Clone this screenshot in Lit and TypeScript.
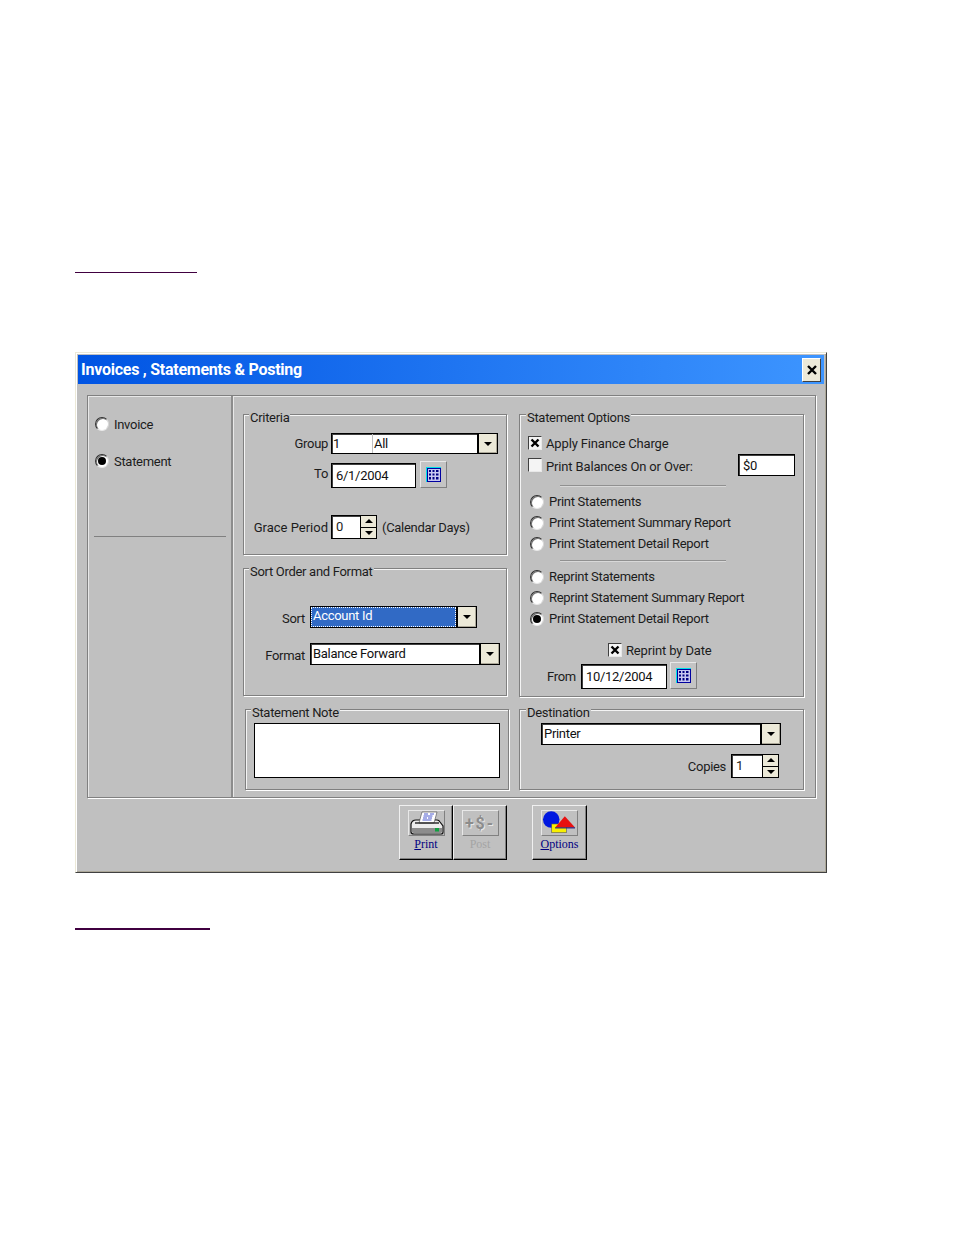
import { LitElement, css, html, svg } from 'lit'
import { customElement } from 'lit/decorators.js'

const calendarIcon = svg`
  <svg class="cal-icon" viewBox="0 0 15 15" width="15" height="15">
    <rect x="0" y="0" width="15" height="15" fill="#00e0e8" />
    <rect x="1" y="1" width="14" height="14" fill="#0000a0" />
    <rect x="2" y="2" width="12" height="12" fill="#c8c8f0" />
    <path d="M3 3h2v2H3zM6.500 3h2v2h-2zM10 3h2.500v2H10zM3 6.500h2v2H3zM6.500 6.500h2v2h-2zM10 6.500h2.500v2H10zM3 10h2v2.500H3zM6.500 10h2v2.500h-2zM10 10h2.500v2.500H10z" fill="#000080" />
  </svg>
`

const printerIcon = svg`
  <svg viewBox="0 0 35 24" width="35" height="24">
    <path d="M2 13q1-4 5-4h21q2 0 3 2l3 4v6q0 2-2 2H5q-3 0-3-2z" fill="#ececec" stroke="#111" stroke-width="1.200" />
    <path d="M3 17h30v4q0 1-2 1H5q-2 0-2-1z" fill="#8c8c8c" />
    <path d="M13 1h15l-3 11H10z" fill="#fff" stroke="#444" stroke-width=".6" />
    <path d="M15 3h4M21 3h4M14.500 5h9M14 7h4M19 7h4M13.500 9h9" stroke="#2030c0" stroke-width=".8" />
    <path d="M6 12h24" stroke="#222" stroke-width="1.400" />
    <rect x="26" y="17" width="4" height="3.500" fill="#10a040" />
  </svg>
`

const shapesIcon = svg`
  <svg viewBox="0 0 36 26" width="36" height="26">
    <circle cx="9.500" cy="9.500" r="8.500" fill="#0018e0" />
    <rect x="10" y="14" width="15" height="9" fill="#f8f000" stroke="#555" stroke-width=".6" />
    <path d="M23.500 6L34 17.500H13.500z" fill="#e81010" />
    <path d="M13.500 18h20.500" stroke="#202080" stroke-width="1.200" />
  </svg>
`

const checkMark = svg`
  <svg viewBox="0 0 10 10" width="10" height="10">
    <path d="M1.500 1.500l7 7M8.500 1.500l-7 7" stroke="#000" stroke-width="2.400" />
  </svg>
`

const closeMark = svg`
  <svg viewBox="0 0 10 10" width="10" height="10">
    <path d="M1 1l8 8M9 1l-8 8" stroke="#000" stroke-width="2.400" />
  </svg>
`

const arrowDown = svg`<svg viewBox="0 0 8 4" width="8" height="4"><path d="M0 0h8L4 4z" fill="#000" /></svg>`
const arrowUp = svg`<svg viewBox="0 0 8 4" width="8" height="4"><path d="M0 4h8L4 0z" fill="#000" /></svg>`

@customElement('app-root')
export class AppRoot extends LitElement {
  private radio(label: string, checked = false) {
    return html`
      <div class="radio-row">
        <span class="radio ${checked ? 'on' : ''}"></span>
        <span>${label}</span>
      </div>
    `
  }

  private check(checked: boolean) {
    return html`<span class="check ${checked ? 'on' : ''}">${checked ? checkMark : ''}</span>`
  }

  private dropButton() {
    return html`<span class="drop-btn">${arrowDown}</span>`
  }

  private spin(value: string) {
    return html`
      <div class="spin">
        <span class="spin-value">${value}</span>
        <span class="spin-btns">
          <span class="spin-btn">${arrowUp}</span>
          <span class="spin-btn">${arrowDown}</span>
        </span>
      </div>
    `
  }

  protected render() {
    return html`
      <div class="page">
        <div class="rule top-rule"></div>

        <div class="window">
          <div class="title-bar">
            <span class="title">Invoices , Statements &amp; Posting</span>
            <span class="close">${closeMark}</span>
          </div>

          <div class="panel">
            <div class="side">
              <div class="side-invoice">${this.radio('Invoice')}</div>
              <div class="side-statement">${this.radio('Statement', true)}</div>
              <div class="side-sep"></div>
            </div>

            <div class="main">
              <div class="col-left">
                <div class="group criteria">
                  <span class="legend">Criteria</span>
                  <div class="row group-row">
                    <span class="label crit-label">Group</span>
                    <div class="field combo group-combo">
                      <span class="group-code">1</span>
                      <span class="combo-text">All</span>
                      ${this.dropButton()}
                    </div>
                  </div>
                  <div class="row to-row">
                    <span class="label crit-label to-label">To</span>
                    <span class="field date date-to">6/1/2004</span>
                    <span class="cal-btn">${calendarIcon}</span>
                  </div>
                  <div class="row grace-row">
                    <span class="label crit-label grace-label">Grace Period</span>
                    ${this.spin('0')}
                    <span class="days">(Calendar Days)</span>
                  </div>
                </div>

                <div class="group sort">
                  <span class="legend">Sort Order and Format</span>
                  <div class="row sort-row">
                    <span class="label sort-label">Sort</span>
                    <div class="field combo sort-combo">
                      <span class="combo-text selected">Account Id</span>
                      ${this.dropButton()}
                    </div>
                  </div>
                  <div class="row format-row">
                    <span class="label sort-label">Format</span>
                    <div class="field combo format-combo">
                      <span class="combo-text">Balance Forward</span>
                      ${this.dropButton()}
                    </div>
                  </div>
                </div>

                <div class="group note">
                  <span class="legend">Statement Note</span>
                  <div class="note-box"></div>
                </div>
              </div>

              <div class="col-right">
                <div class="group options">
                  <span class="legend">Statement Options</span>
                  <div class="row apply-row">${this.check(true)}<span class="check-text">Apply Finance Charge</span></div>
                  <div class="row balance-row">
                    ${this.check(false)}<span class="check-text balance-text">Print Balances On or Over:</span>
                    <span class="field amount">$0</span>
                  </div>
                  <div class="sep sep-first"></div>
                  <div class="radio-block">
                    ${this.radio('Print Statements')}
                    ${this.radio('Print Statement Summary Report')}
                    ${this.radio('Print Statement Detail Report')}
                  </div>
                  <div class="sep sep-second"></div>
                  <div class="radio-block">
                    ${this.radio('Reprint Statements')}
                    ${this.radio('Reprint Statement Summary Report')}
                    ${this.radio('Print Statement Detail Report', true)}
                  </div>
                  <div class="row reprint-row">${this.check(true)}<span class="check-text">Reprint by Date</span></div>
                  <div class="row from-row">
                    <span class="from-label">From</span>
                    <span class="field date date-from">10/12/2004</span>
                    <span class="cal-btn">${calendarIcon}</span>
                  </div>
                </div>

                <div class="group destination">
                  <span class="legend">Destination</span>
                  <div class="field combo dest-combo">
                    <span class="combo-text">Printer</span>
                    ${this.dropButton()}
                  </div>
                  <div class="row copies-row">
                    <span>Copies</span>
                    ${this.spin('1')}
                  </div>
                </div>
              </div>
            </div>
          </div>

          <div class="toolbar">
            <div class="tool">
              <span class="tool-icon">${printerIcon}</span>
              <span class="tool-label"><u>P</u>rint</span>
            </div>
            <div class="tool">
              <span class="tool-icon dollar">+$-</span>
              <span class="tool-label disabled">Post</span>
            </div>
            <div class="tool tool-options">
              <span class="tool-icon">${shapesIcon}</span>
              <span class="tool-label"><u>O</u>ptions</span>
            </div>
          </div>
        </div>

        <div class="rule bottom-rule"></div>
      </div>
    `
  }

  static styles = css`
    :host {
      display: block;
      background: #fff;
      height: 1235px;
      font-family: Roboto, 'Liberation Sans', Arial, sans-serif;
      font-size: 13px;
      letter-spacing: -0.3px;
      color: #1c1c1c;
    }

    * {
      box-sizing: border-box;
    }

    .page {
      padding: 271px 0 0 75px;
    }

    .rule {
      background: #400040;
    }

    .top-rule {
      width: 122px;
      height: 1px;
      margin-top: 1px;
    }

    .bottom-rule {
      width: 135px;
      height: 2px;
      margin-top: 55px;
    }

    .window {
      width: 752px;
      height: 521px;
      margin-top: 79px;
      padding: 2px;
      background: #c0c0c0;
      border: 1px solid;
      border-color: #ece9d8 #404040 #404040 #ece9d8;
      box-shadow: inset 1px 1px 0 #fff, inset -1px -1px 0 #aca899;
    }

    .title-bar {
      height: 29px;
      display: flex;
      align-items: center;
      justify-content: space-between;
      padding: 0 3px 0 3px;
      background: linear-gradient(90deg, #0054e3, #3d95ff);
    }

    .title {
      color: #fff;
      font-size: 16px;
      font-weight: bold;
      letter-spacing: -0.25px;
    }

    .close {
      width: 19px;
      height: 24px;
      display: flex;
      align-items: center;
      justify-content: center;
      background: #ece9d8;
      border: 1px solid;
      border-color: #fff #404040 #404040 #fff;
    }

    .panel {
      display: flex;
      width: 729px;
      height: 403px;
      margin: 11px 0 0 9px;
      border: 1px solid #808080;
      box-shadow: inset 1px 1px 0 #e8e8e8, 1px 1px 0 #fff;
    }

    .side {
      width: 145px;
      border-right: 2px solid #8c8c8c;
    }

    .side-invoice {
      margin: 18px 0 0 7px;
    }

    .side-statement {
      margin: 17px 0 0 7px;
    }

    .side-sep {
      width: 132px;
      height: 1px;
      margin: 65px 0 0 6px;
      background: #808080;
    }

    .main {
      display: flex;
      padding: 18px 0 0 9px;
      border-left: 1px solid #e8e8e8;
    }

    .col-left {
      width: 276px;
    }

    .group {
      position: relative;
      border: 1px solid #808080;
      box-shadow: inset 1px 1px 0 #f4f4f4, 1px 1px 0 #fff;
    }

    .legend {
      position: absolute;
      top: -5px;
      left: 5px;
      padding: 0 1px;
      background: #c0c0c0;
      line-height: 16px;
    }

    .criteria {
      width: 264px;
      height: 141px;
    }

    .sort {
      width: 264px;
      height: 128px;
      margin-top: 13px;
    }

    .note {
      width: 264px;
      height: 81px;
      margin: 13px 0 0 2px;
    }

    .options {
      width: 285px;
      height: 283px;
    }

    .destination {
      width: 285px;
      height: 81px;
      margin-top: 12px;
    }

    .options .legend,
    .destination .legend {
      left: 6px;
    }

    .row {
      display: flex;
      align-items: center;
    }

    .label {
      text-align: right;
    }

    .field {
      display: flex;
      align-items: center;
      background: #fff;
      color: #111;
      border: 1px solid #000;
      box-shadow: inset 1px 1px 0 #404040;
    }

    .combo {
      height: 100%;
    }

    .combo-text {
      flex: 1;
      padding-left: 2px;
      line-height: 18px;
    }

    .drop-btn {
      width: 20px;
      height: 100%;
      display: flex;
      align-items: center;
      justify-content: center;
      background: #ece9d8;
      border-left: 2px solid #000;
      box-shadow: inset -1px -1px 0 #aca899;
      flex: none;
    }

    .crit-label {
      width: 84px;
      margin-right: 3px;
    }

    .grace-label {
      letter-spacing: 0;
    }

    .group-row {
      height: 21px;
      margin-top: 18px;
    }

    .group-combo {
      width: 167px;
    }

    .group-combo .combo-text {
      padding-left: 1px;
    }

    .group-code {
      width: 41px;
      height: 100%;
      padding-left: 1px;
      line-height: 19px;
      border-right: 1px solid #c0c0c0;
    }

    .to-row {
      height: 27px;
      margin-top: 7px;
      align-items: flex-start;
    }

    .to-label {
      margin-top: 5px;
    }

    .date {
      height: 25px;
      margin-top: 2px;
      padding-left: 4px;
    }

    .date-to {
      width: 85px;
    }

    .date-from {
      width: 86px;
    }

    .cal-btn {
      width: 27px;
      height: 27px;
      margin-left: 4px;
      display: flex;
      align-items: center;
      justify-content: center;
      background: #c4c4c4;
      border: 1px solid;
      border-color: #e8e8e8 #808080 #808080 #e8e8e8;
    }

    .grace-row {
      height: 24px;
      margin-top: 27px;
    }

    .spin {
      display: flex;
      width: 46px;
      height: 24px;
      background: #fff;
      border: 1px solid #000;
      box-shadow: inset 1px 1px 0 #404040;
    }

    .spin-value {
      flex: 1;
      padding-left: 4px;
      line-height: 22px;
    }

    .spin-btns {
      width: 16px;
      display: flex;
      flex-direction: column;
      border-left: 1px solid #000;
      background: #000;
      gap: 1px;
    }

    .spin-btn {
      flex: 1;
      display: flex;
      align-items: center;
      justify-content: center;
      background: #ece9d8;
    }

    .days {
      margin-left: 5px;
    }

    .sort-label {
      width: 61px;
      margin: 2px 5px 0 0;
    }

    .sort-row {
      height: 22px;
      margin-top: 37px;
    }

    .format-row {
      height: 22px;
      margin-top: 15px;
    }

    .sort-combo {
      width: 167px;
    }

    .format-combo {
      width: 190px;
    }

    .selected {
      align-self: stretch;
      line-height: 18px;
      background: #316ac5;
      color: #fff;
      outline: 1px dotted #fff;
      outline-offset: -1px;
    }

    .note-box {
      width: 246px;
      height: 55px;
      margin: 13px 0 0 8px;
      background: #fff;
      border: 1px solid #000;
    }

    .check {
      width: 14px;
      height: 14px;
      margin-right: 4px;
      display: flex;
      align-items: center;
      justify-content: center;
      flex: none;
      background: #f4f4f4;
      border: 1px solid;
      border-color: #404040 #e8e8e8 #e8e8e8 #404040;
    }

    .check-text {
      letter-spacing: -0.15px;
    }

    .apply-row {
      height: 14px;
      margin-top: 21px;
      padding-left: 8px;
    }

    .balance-row {
      height: 22px;
      margin-top: 4px;
      padding-left: 8px;
    }

    .balance-text {
      margin-top: 2px;
    }

    .amount {
      width: 57px;
      height: 22px;
      margin: 0 8px 0 auto;
      padding-left: 4px;
    }

    .sep {
      width: 166px;
      height: 2px;
      margin-left: 40px;
      background: #909090;
      border-bottom: 1px solid #d8d8d8;
    }

    .sep-first {
      margin-top: 9px;
    }

    .sep-second {
      margin-top: 6px;
    }

    .radio-block {
      margin: 4px 0 0 10px;
    }

    .radio-row {
      height: 21px;
      display: flex;
      align-items: center;
      gap: 5px;
    }

    .side .radio-row {
      height: 20px;
      gap: 5px;
    }

    .radio {
      width: 14px;
      height: 14px;
      display: flex;
      align-items: center;
      justify-content: center;
      flex: none;
      border-radius: 50%;
      background: #fff;
      border: 1px solid;
      border-color: #303030 #d8d8d8 #e8e8e8 #303030;
      box-shadow: inset 1px 1px 0 #707070;
    }

    .radio.on::after {
      content: '';
      width: 8px;
      height: 8px;
      border-radius: 50%;
      background: #000;
    }

    .reprint-row {
      height: 20px;
      margin-top: 11px;
      padding-left: 88px;
    }

    .from-row {
      height: 27px;
      margin-top: 2px;
      padding-left: 27px;
      align-items: flex-start;
    }

    .from-label {
      width: 34px;
      margin-top: 7px;
    }

    .from-row .cal-btn {
      margin-left: 3px;
    }

    .dest-combo {
      width: 240px;
      height: 22px;
      margin: 13px 0 0 21px;
    }

    .copies-row {
      justify-content: flex-end;
      gap: 5px;
      height: 24px;
      margin: 9px 24px 0 0;
    }

    .copies-row .spin {
      width: 48px;
    }

    .toolbar {
      display: flex;
      height: 55px;
      margin: 7px 0 0 321px;
    }

    .tool {
      width: 54px;
      height: 55px;
      display: flex;
      flex-direction: column;
      align-items: center;
      padding-top: 4px;
      background: #c0c0c0;
      border: 1px solid;
      border-color: #f0f0f0 #000 #000 #f0f0f0;
      box-shadow: inset -1px -1px 0 #808080;
    }

    .tool-options {
      width: 55px;
      margin-left: 25px;
    }

    .tool-icon {
      width: 37px;
      height: 26px;
      display: flex;
      align-items: center;
      justify-content: center;
      border: 1px solid;
      border-color: #e8e8e8 #808080 #808080 #e8e8e8;
    }

    .dollar {
      color: #8c8c8c;
      font-size: 16px;
      font-weight: bold;
      letter-spacing: 2px;
      text-shadow: 1px 1px 0 #e8e8e8;
    }

    .tool-label {
      margin-top: 1px;
      font-family: 'Liberation Serif', 'Times New Roman', serif;
      font-size: 12px;
      letter-spacing: 0;
      color: #000080;
      line-height: 14px;
    }

    .disabled {
      color: #a4a4a4;
    }
  `
}

declare global {
  interface HTMLElementTagNameMap {
    'app-root': AppRoot
  }
}
